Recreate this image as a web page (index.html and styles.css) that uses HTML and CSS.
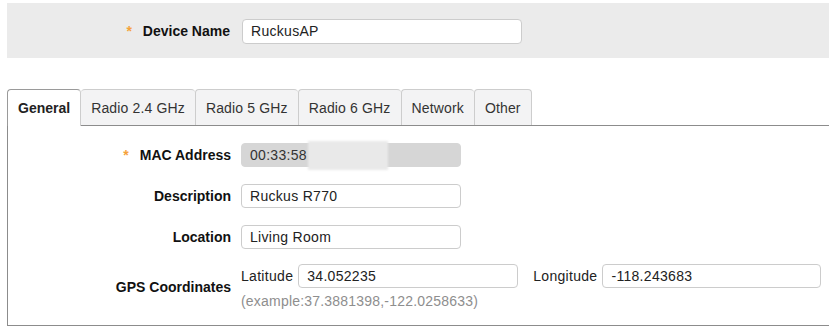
FILE: index.html
```html
<!DOCTYPE html>
<html>
<head>
<meta charset="utf-8">
<link rel="stylesheet" href="styles.css">
</head>
<body>
<div class="name-bar">
  <div class="field-label"><span class="req">*</span>Device Name</div>
  <div class="control"><div class="text-input name-input">RuckusAP</div></div>
</div>

<div class="tabs">
  <div class="tab-strip">
    <div class="tab active">General</div>
    <div class="tab">Radio 2.4 GHz</div>
    <div class="tab">Radio 5 GHz</div>
    <div class="tab">Radio 6 GHz</div>
    <div class="tab">Network</div>
    <div class="tab last">Other</div>
  </div>
  <div class="panel">
    <div class="row">
      <div class="field-label"><span class="req">*</span>MAC Address</div>
      <div class="control">
        <div class="text-input disabled mac">00:33:58<span class="blur"></span></div>
      </div>
    </div>
    <div class="row">
      <div class="field-label">Description</div>
      <div class="control"><div class="text-input">Ruckus R770</div></div>
    </div>
    <div class="row">
      <div class="field-label">Location</div>
      <div class="control"><div class="text-input">Living Room</div></div>
    </div>
    <div class="row gps">
      <div class="field-label">GPS Coordinates</div>
      <div class="control">
        <div class="coords">
          <span class="coord-label">Latitude</span>
          <div class="text-input lat">34.052235</div>
          <span class="coord-label lon-label">Longitude</span>
          <div class="text-input lon">-118.243683</div>
        </div>
        <div class="hint">(example:37.3881398,-122.0258633)</div>
      </div>
    </div>
  </div>
</div>
</body>
</html>
```

FILE: styles.css
```css
html, body {
  margin: 0;
  padding: 0;
  background: #ffffff;
}
body {
  font-family: "Liberation Sans", Arial, Helvetica, sans-serif;
  font-size: 14px;
  color: #1d1d1d;
  padding: 3px 1px 0 7px;
}
.name-bar {
  background: #ebebeb;
  height: 55px;
  display: grid;
  grid-template-columns: 223px 1fr;
  column-gap: 12px;
  align-items: center;
}
.field-label {
  text-align: right;
  font-weight: bold;
  color: #111111;
  white-space: nowrap;
}
.req {
  color: #f5a23a;
  margin-right: 11px;
  font-weight: bold;
}
.name-bar .field-label { padding-top: 1px; }
.text-input {
  box-sizing: border-box;
  height: 24px;
  width: 220px;
  border: 1px solid #cccccc;
  border-radius: 4px;
  background: #ffffff;
  padding: 0 8px;
  line-height: 22px;
  color: #222222;
  white-space: nowrap;
  letter-spacing: 0.3px;
  position: relative;
}
.name-input {
  width: 280px;
  height: 25px;
  line-height: 23px;
  margin-top: 2px;
}
.tabs {
  margin-top: 31px;
}
.tab-strip {
  display: flex;
  border-bottom: 1px solid #8c8c8c;
  height: 36px;
  box-sizing: content-box;
}
.tab {
  box-sizing: border-box;
  height: 36px;
  padding: 0 10px;
  line-height: 36px;
  background: #f3f3f4;
  border: 1px solid #cdcdcd;
  border-bottom: none;
  border-right: none;
  border-radius: 4px 4px 0 0;
  color: #333333;
  letter-spacing: 0.15px;
}
.tab.last {
  border-right: 1px solid #cdcdcd;
}
.tab.active {
  background: #ffffff;
  font-weight: bold;
  color: #222222;
  height: 37px;
  margin-bottom: -1px;
  border-color: #9a9a9a;
  border-right: 1px solid #cdcdcd;
  letter-spacing: 0;
}
.tab.active + .tab {
  border-left: none;
}
.panel {
  border-left: 1px solid #8c8c8c;
  border-bottom: 1px solid #8c8c8c;
  padding: 17px 0 15px 0;
  display: flex;
  flex-direction: column;
  gap: 17px;
}
.row {
  display: grid;
  grid-template-columns: 223px 1fr;
  column-gap: 10px;
  align-items: center;
}
.row.gps {
  margin-top: -2px;
}
.text-input.disabled {
  background: #d6d6d6;
  border-color: #d6d6d6;
  color: #333333;
}
.blur {
  position: absolute;
  left: 66px;
  top: -3px;
  width: 80px;
  height: 29px;
  background: #e9e9e9;
  filter: blur(1px);
}
.coords {
  display: flex;
  align-items: center;
}
.coord-label {
  color: #222222;
  margin-right: 5px;
  letter-spacing: 0.3px;
}
.lon-label {
  margin-left: 15px;
  margin-right: 5px;
}
.lat { width: 220px; }
.lon { width: 219px; }
.hint {
  color: #8e8e8e;
  margin-top: 5px;
  line-height: 17px;
  letter-spacing: 0.2px;
}
```
